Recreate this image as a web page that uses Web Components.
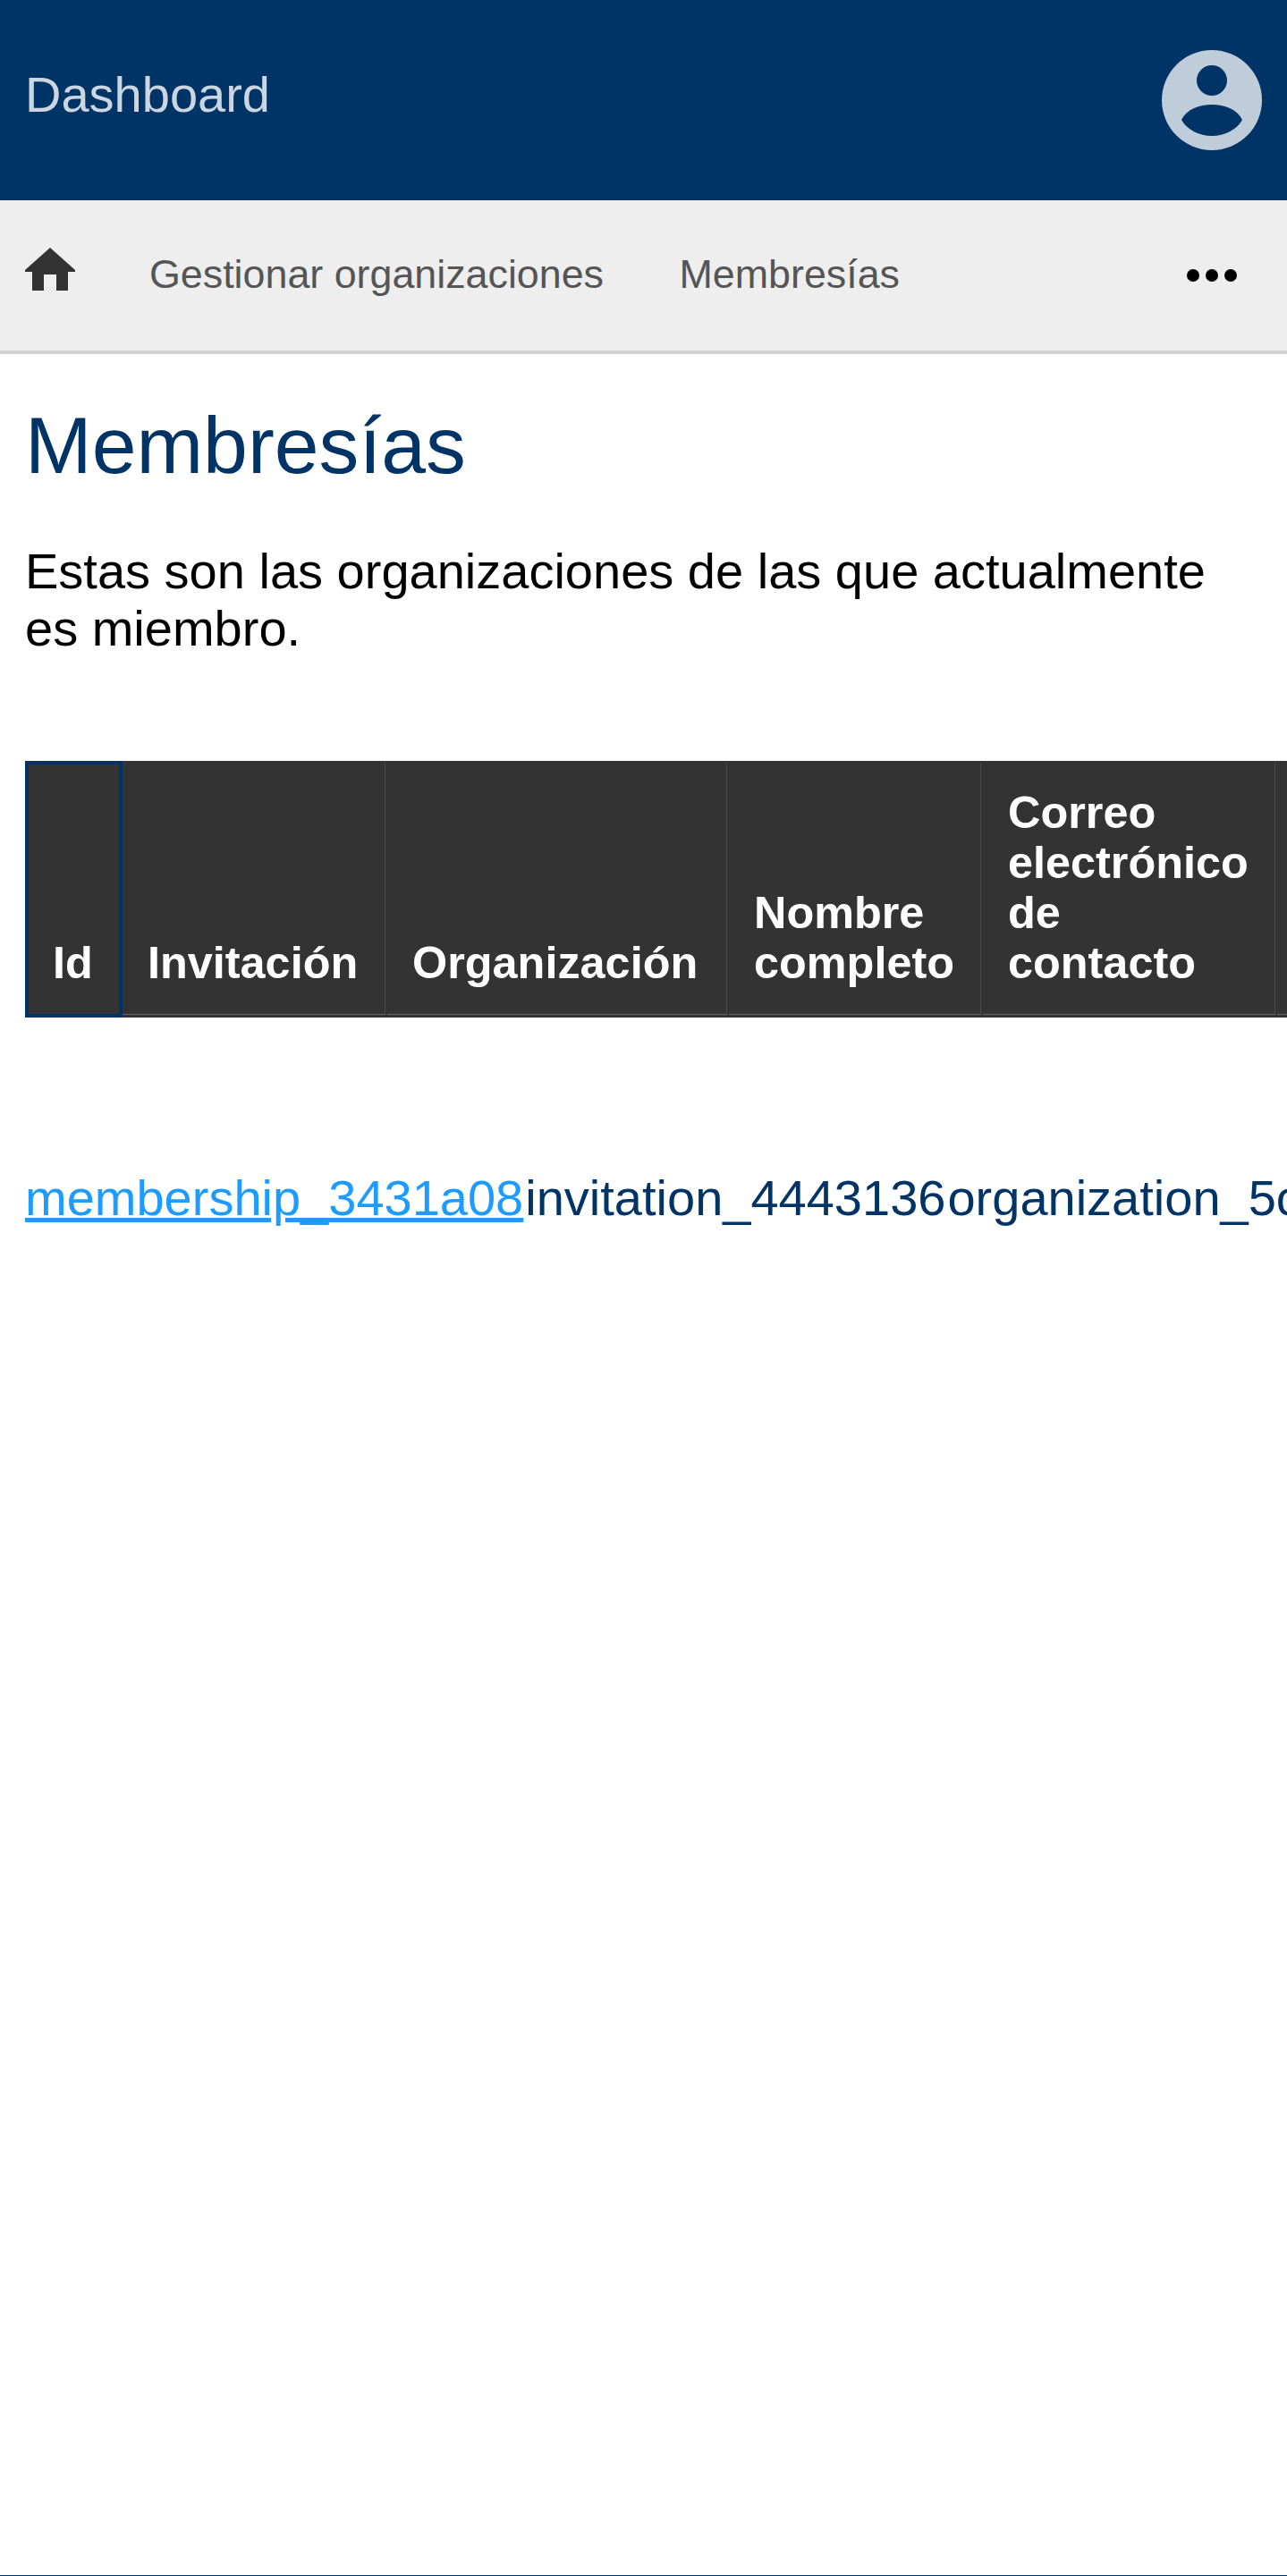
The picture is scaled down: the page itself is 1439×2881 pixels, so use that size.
<!DOCTYPE html>
<html lang="es">
<head>
<meta charset="utf-8">
<title>Membresías</title>
<style>
  html, body { margin: 0; padding: 0; background: #fff; }
  body { font-family: "Liberation Sans", Arial, sans-serif; overflow-x: hidden; }
</style>
</head>
<body>
<app-shell>
  <top-bar title="Dashboard"></top-bar>
  <nav-bar>
    <nav-link>Gestionar organizaciones</nav-link>
    <nav-link>Membresías</nav-link>
  </nav-bar>
  <page-content heading="Membresías">
    <p slot="intro">Estas son las organizaciones de las que actualmente es miembro.</p>
    <member-table></member-table>
  </page-content>
</app-shell>

<script>
class AppShell extends HTMLElement {
  constructor() {
    super();
    this.attachShadow({ mode: 'open' }).innerHTML = `
      <style>
        :host { display: flex; flex-direction: column; min-height: 2881px; box-sizing: border-box; border-bottom: 1px solid #003366; overflow: hidden; }
      </style>
      <slot></slot>
    `;
  }
}

class TopBar extends HTMLElement {
  connectedCallback() {
    if (this.shadowRoot) return;
    this.attachShadow({ mode: 'open' }).innerHTML = `
      <style>
        :host { display: flex; align-items: center; justify-content: space-between; height: 224px; padding: 0 28px; box-sizing: border-box; background: #003366; color: #ccd6e0; font-size: 56px; }
        span { margin-bottom: 13px; }
        svg { width: 112px; height: 112px; display: block; }
      </style>
      <span>${this.getAttribute('title')}</span>
      <svg viewBox="0 0 112 112" aria-hidden="true">
        <path fill="#bfccd9" fill-rule="evenodd" d="M56 0a56 56 0 1 0 0 112a56 56 0 1 0 0-112zM56 17a17 17 0 1 1 0 34a17 17 0 1 1 0-34zM22 78C28 66 42 61 56 61C70 61 84 66 90 78C84 89 70 96 56 96C42 96 28 89 22 78z"/>
      </svg>
    `;
  }
}

class NavBar extends HTMLElement {
  constructor() {
    super();
    this.attachShadow({ mode: 'open' }).innerHTML = `
      <style>
        :host { display: flex; align-items: center; height: 172px; box-sizing: border-box; padding: 0 28px; background: #eee; border-bottom: 4px solid #d3d3d3; }
        .home { width: 56px; height: 48px; display: block; margin: 0 41px 14px 0; }
        .links { display: flex; flex: 1; margin-bottom: 3px; }
        .more { display: flex; gap: 7px; margin-right: 28px; }
        .more i { width: 14px; height: 14px; border-radius: 50%; background: #000; }
      </style>
      <svg class="home" viewBox="0 0 56 48" aria-hidden="true">
        <path fill="#333" d="M28 0L56 25V27H48V48H35V30H21V48H8V27H0V25z"/>
      </svg>
      <div class="links"><slot></slot></div>
      <div class="more"><i></i><i></i><i></i></div>
    `;
  }
}

class NavLink extends HTMLElement {
  constructor() {
    super();
    this.attachShadow({ mode: 'open' }).innerHTML = `
      <style>
        :host { display: block; padding: 0 42.5px 0 42px; font-size: 44.8px; color: #555; }
      </style>
      <slot></slot>
    `;
  }
}

class PageContent extends HTMLElement {
  connectedCallback() {
    if (this.shadowRoot) return;
    this.attachShadow({ mode: 'open' }).innerHTML = `
      <style>
        :host { display: block; padding: 0 0 0 28px; }
        h1 { margin: 52px 0 0; font-size: 89.6px; font-weight: 400; line-height: 100px; color: #003366; }
        ::slotted(p) { margin: 59px 28px 0 0; font-size: 56px; line-height: 64px; color: #000; }
      </style>
      <h1>${this.getAttribute('heading')}</h1>
      <slot name="intro"></slot>
      <slot></slot>
    `;
  }
}

class MemberTable extends HTMLElement {
  constructor() {
    super();
    const heads = [
      ['Id', 109], ['Invitación', 296], ['Organización', 382],
      ['Nombre<br>completo', 284], ['Correo<br>electrónico<br>de<br>contacto', 329], ['', 200]
    ];
    this.attachShadow({ mode: 'open' }).innerHTML = `
      <style>
        :host { display: block; margin-top: 116px; }
        .head { display: flex; width: max-content; height: 287px; background: #333; }
        .th { box-sizing: border-box; display: flex; align-items: flex-end; padding: 0 0 33px 28px; color: #fff; font-size: 50.4px; font-weight: 700; line-height: 56px; position: relative; }
        .th::after { content: ""; position: absolute; left: 0; right: 2px; bottom: 3px; height: 1px; background: #666; }
        .th:not(.id)::before { content: ""; position: absolute; right: 2px; top: 3px; bottom: 3px; width: 1px; background: #4a4a4a; }
        .id { border: 4px solid #003366; padding: 0 0 29px 27px; }
        .id::after { display: none; }
        .row { display: flex; width: max-content; margin-top: 170px; font-size: 56px; line-height: 64px; color: #003366; white-space: nowrap; }
        .row span { margin-left: 2px; }
        a { color: #1e9bff; text-decoration: underline; }
      </style>
      <div class="head">
        ${heads.map(([t, w], i) => `<div class="th${i === 0 ? ' id' : ''}" style="width:${w}px"><span>${t}</span></div>`).join('')}
      </div>
      <div class="row">
        <a href="#">membership_3431a08</a><span>invitation_4443136</span><span>organization_5c3a91</span>
      </div>
    `;
  }
}

customElements.define('app-shell', AppShell);
customElements.define('top-bar', TopBar);
customElements.define('nav-bar', NavBar);
customElements.define('nav-link', NavLink);
customElements.define('page-content', PageContent);
customElements.define('member-table', MemberTable);
</script>
</body>
</html>
